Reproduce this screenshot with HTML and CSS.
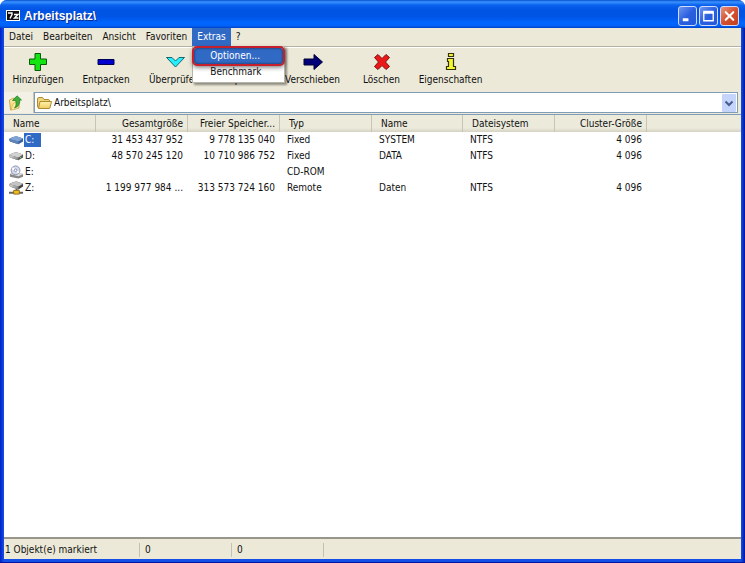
FILE: index.html
```html
<!DOCTYPE html>
<html lang="de">
<head>
<meta charset="utf-8">
<title>Arbeitsplatz\</title>
<link rel="stylesheet" href="styles.css">
</head>
<body>
<svg class="defs" aria-hidden="true">
  <defs>
    <linearGradient id="metal" x1="0" y1="0" x2="1" y2="1">
      <stop offset="0" stop-color="#e4e4e4"/><stop offset="1" stop-color="#777"/>
    </linearGradient>
    <linearGradient id="gold" x1="0" y1="0" x2="0" y2="1">
      <stop offset="0" stop-color="#fff3ae"/><stop offset="1" stop-color="#efcb62"/>
    </linearGradient>
  </defs>
</svg>
<div class="window">
  <header class="titlebar">
    <svg class="app-icon" viewBox="0 0 14 11">
      <rect width="14" height="11" fill="#fff"/><rect x="1" y="1" width="12" height="9" fill="#111"/>
      <path d="M2 3H6V4.500L4 8.500M8 4.500H12L8.500 8H12.500" fill="none" stroke="#fff" stroke-width="1.4"/>
    </svg>
    <h1>Arbeitsplatz\</h1>
    <div class="controls">
      <button class="control" aria-label="Minimieren"><svg viewBox="0 0 18 18"><path d="M4 13H10" stroke="#fff" stroke-width="3"/></svg></button>
      <button class="control" aria-label="Maximieren"><svg viewBox="0 0 18 18"><path d="M4 5H14V14H4Z" fill="none" stroke="#fff" stroke-width="1.4"/><path d="M3.500 5H14.500" stroke="#fff" stroke-width="3"/></svg></button>
      <button class="control close" aria-label="Schließen"><svg viewBox="0 0 18 18"><path d="M5 5L13 13M13 5L5 13" stroke="#fff" stroke-width="2.200" stroke-linecap="round"/></svg></button>
    </div>
  </header>

  <div class="client">
    <nav class="menubar">
      <button>Datei</button>
      <button>Bearbeiten</button>
      <button>Ansicht</button>
      <button>Favoriten</button>
      <div class="menu-open">
        <button class="active">Extras</button>
        <div class="dropdown">
          <button class="marked">Optionen...</button>
          <button>Benchmark</button>
        </div>
      </div>
      <button>?</button>
    </nav>

    <div class="toolbar">
      <button><svg viewBox="0 0 20 20"><path d="M7 1.500H12.500V7H18.500V12.500H12.500V18.500H7V12.500H1.500V7H7Z" fill="#12e512" stroke="#075d09"/></svg>Hinzufügen</button>
      <button><svg viewBox="0 0 20 20"><path d="M2 7.500H18V12.500H2Z" fill="#0000cf" stroke="#000050"/></svg>Entpacken</button>
      <button><svg viewBox="0 0 20 20"><path d="M1.500 5.500H7L10.500 9L14 5.500H19.500L10.500 15Z" fill="#25efff" stroke="#17666c"/></svg>Überprüfen</button>
      <button><svg viewBox="0 0 20 20"><path d="M1 7H11V3L19 10L11 17V13H1Z" fill="#0a8" stroke="#043"/></svg>Kopieren</button>
      <button><svg viewBox="0 0 20 20"><path d="M1 7H11V2.500L19.500 10L11 17.500V13H1Z" fill="#000078" stroke="#000034"/></svg>Verschieben</button>
      <button><svg viewBox="0 0 20 20"><path d="M6 2.500L10 6.500L14 2.500L17.500 5.500L13.500 10L17.500 14.500L14 17.500L10 13.500L6 17.500L2.500 14.500L6.500 10L2.500 5.500Z" fill="#ec1717" stroke="#781414"/></svg>Löschen</button>
      <button><svg viewBox="0 0 20 20"><path d="M7.500 1.500H12.500V4.500H7.500ZM6.500 6.500H12.500V14.500H14.500V17.500H5.500V14.500H7.500V9.500H6.500Z" fill="#f5f532" stroke="#32320a" stroke-width="1.200"/></svg>Eigenschaften</button>
    </div>

    <div class="addressbar">
      <button class="up" aria-label="Übergeordneter Ordner">
        <svg viewBox="0 0 16 16"><path d="M1.500 5L6 3L7 5L11 4V13L2.500 15Z" fill="url(#gold)" stroke="#c9a94c"/><path d="M3 15L5.500 8L12 6.500L10 13.500Z" fill="#ffeaa0" stroke="#d2b154" stroke-width=".6"/><path d="M4.500 5.500L9 .8L13.500 5L11.500 5.200C12 9 10 12 6.500 13C8.500 10.500 8.500 8 7.500 5.500Z" fill="#3fae38" stroke="#1d7a22" stroke-width=".7"/></svg>
      </button>
      <div class="combo">
        <svg class="folder" viewBox="0 0 16 16"><path d="M1.500 4Q1.500 2.500 3 2.500H6.500L8 4.500H12.500Q13.500 4.500 13.500 6V13H3Q1.500 13 1.500 11Z" fill="#f0d67a" stroke="#ab8b2c"/><path d="M2.500 13.500L4 6.500H15.500L14 12.500Q13.800 13.500 13 13.500Z" fill="url(#gold)" stroke="#ab8b2c"/></svg>
        <select aria-label="Adresse"><option>Arbeitsplatz\</option></select>
        <svg class="arrow" viewBox="0 0 14 18"><rect width="14" height="18" rx="1" fill="#c5d4fb"/><path d="M3.500 7.500L7 11L10.500 7.500" fill="none" stroke="#465d8d" stroke-width="2"/></svg>
      </div>
    </div>

    <main class="files">
      <table>
        <colgroup><col class="c-data"><col class="c-data"><col class="c-data"><col class="c-data"><col class="c-short"><col class="c-data"><col class="c-data"><col></colgroup>
        <thead><tr><th>Name</th><th class="num">Gesamtgröße</th><th class="num free">Freier Speicher...</th><th>Typ</th><th>Name</th><th>Dateisystem</th><th class="num">Cluster-Größe</th><th class="rest"></th></tr></thead>
        <tbody>
          <tr><td class="drive"><svg viewBox="0 0 16 14"><path d="M0 6Q5 3 8 3L15 5.500V8.500L10 11.500L1 8.500Z" fill="#3a62a0"/><path d="M0 6Q5 3 8 3L15 5.500L10 8.500Z" fill="#7fa3d3"/><path d="M0 6L10 8.500V11.500L1 8.500Z" fill="#5f83b8"/></svg><span class="selected">C:</span></td><td class="num">31 453 437 952</td><td class="num">9 778 135 040</td><td>Fixed</td><td>SYSTEM</td><td>NTFS</td><td class="num">4 096</td><td></td></tr>
          <tr><td class="drive"><svg viewBox="0 0 16 14"><path d="M0 6Q5 3 8 3L15 5.500V8.500L10 11.500L1 8.500Z" fill="#555"/><path d="M0 6Q5 3 8 3L15 5.500L10 8.500Z" fill="#d2d2d2"/><path d="M0 6L10 8.500V11.500L1 8.500Z" fill="url(#metal)"/><path d="M11.500 9L13 8" stroke="#7ddd68"/></svg><span>D:</span></td><td class="num">48 570 245 120</td><td class="num">10 710 986 752</td><td>Fixed</td><td>DATA</td><td>NTFS</td><td class="num">4 096</td><td></td></tr>
          <tr><td class="drive"><svg viewBox="0 0 16 14"><path d="M1 9L5 7L15 9V12L10 14L1 12Z" fill="#888"/><path d="M1 9L5 7L15 9L10 11.500Z" fill="#ddd"/><circle cx="7" cy="5.200" r="4.700" fill="#d5d9ee" stroke="#8c92ac"/><path d="M7 5.200L3.500 3M7 5.200L10.500 7.500" stroke="#fff" stroke-width="2"/><circle cx="7" cy="5.200" r="1.400" fill="#fff" stroke="#8187ad"/></svg><span>E:</span></td><td></td><td></td><td>CD-ROM</td><td></td><td></td><td></td><td></td></tr>
          <tr><td class="drive"><svg viewBox="0 0 16 14"><path d="M0 3Q5 0 8 0L15 2.500V5.500L10 8.500L1 5.500Z" fill="#454545"/><path d="M0 3Q5 0 8 0L15 2.500L10 5.500Z" fill="#c4c4c4"/><path d="M0 3L10 5.500V8.500L1 5.500Z" fill="url(#metal)"/><path d="M8 8V11M0 12H15" stroke="#666" stroke-width="2"/><path d="M5 9.500H11V13.500H5Z" fill="#f1bf22" stroke="#8a6b15"/></svg><span>Z:</span></td><td class="num">1 199 977 984 ...</td><td class="num">313 573 724 160</td><td>Remote</td><td>Daten</td><td>NTFS</td><td class="num">4 096</td><td></td></tr>
        </tbody>
      </table>
    </main>

    <footer class="statusbar"><span class="count">1 Objekt(e) markiert</span><span>0</span><span>0</span></footer>
  </div>
</div>
</body>
</html>
```
FILE: styles.css
```css
* { box-sizing: border-box; }

body {
  margin: 0;
  background: #fff;
  color: #111;
  font: 10px/14px "DejaVu Sans Condensed", "DejaVu Sans", sans-serif;
}

button, select {
  margin: 0;
  padding: 0;
  border: 0;
  background: none;
  color: inherit;
  font: inherit;
}

.defs { position: absolute; width: 0; height: 0; }

.window {
  display: flex;
  flex-direction: column;
  height: 100vh;
  padding: 0 4px 3px;
  background: linear-gradient(90deg, #0020c8, #1450e8 4px, #1450e8 calc(100% - 4px), #0014a0);
  border-bottom: 1px solid #0014a0;
  border-radius: 7px 7px 0 0;
  overflow: hidden;
}

.titlebar {
  display: flex;
  align-items: center;
  flex: none;
  height: 28px;
  margin: 0 -4px;
  padding: 3px 6px 0;
  background: linear-gradient(#0850d0, #3a93ff 2px, #0a62ee 5px, #0054e3 10px, #0055e6 17px, #0066ff 23px, #0060f8 26px, #0041c2);
}

.app-icon { width: 14px; height: 11px; }

h1 {
  flex: 1;
  margin: 0 0 0 4px;
  color: #fff;
  font: bold 12px/16px "Liberation Sans", sans-serif;
  text-shadow: 1px 1px #0a2a8c;
}

.controls { display: flex; gap: 2px; }

.control {
  width: 19px;
  height: 20px;
  border: 1px solid #cfdcfb;
  border-radius: 3px;
  background: linear-gradient(135deg, #6d95f0, #2a5fe0 50%, #2358d8);
}

.control svg { display: block; width: 17px; height: 18px; }
.close { background: linear-gradient(135deg, #e8947c, #d4502f 50%, #c3401f); }

.client {
  display: flex;
  flex: 1;
  flex-direction: column;
  min-height: 0;
  background: #ece9d8;
}

.menubar {
  display: flex;
  flex: none;
  height: 19px;
  border-bottom: 1px solid #b5b2a2;
}

.menubar button { height: 18px; padding: 0 5px; }
.menu-open { position: relative; }
.menubar .active { background: #316ac5; color: #fff; }

.dropdown {
  position: absolute;
  z-index: 1;
  top: 18px;
  left: 0;
  width: 93px;
  padding: 1px 1px 2px;
  background: #fff;
  border: 1px solid #b7b5a9;
  box-shadow: 2px 2px 2px #0006;
}

.menubar .dropdown button {
  display: block;
  width: 100%;
  height: 16px;
  padding: 0 16px;
  text-align: left;
}

.dropdown .marked {
  border-radius: 3px;
  outline: 2px solid #c5202c;
  background: #316ac5;
  box-shadow: inset 0 0 3px #0009, 0 2px 5px 1px #0009;
  color: #fff;
}

.toolbar {
  display: grid;
  flex: none;
  grid-template-columns: 68px 68px repeat(5, 69px);
  height: 45px;
  border-top: 1px solid #fff;
}

.toolbar button {
  display: flex;
  flex-direction: column;
  align-items: center;
  padding-top: 4px;
}

.toolbar svg { width: 20px; height: 20px; margin-bottom: 1px; }

.addressbar { display: flex; flex: none; height: 21px; padding-right: 3px; }
.up { width: 30px; padding-left: 4px; border-right: 1px solid #c6c3b4; background: #f3f1e6; }
.up svg { display: block; width: 16px; height: 16px; }

.combo {
  display: flex;
  flex: 1;
  align-items: center;
  padding: 0 1px;
  border: 1px solid #7f9db9;
  background: #fff;
}

.folder { width: 16px; height: 16px; }
.combo select { flex: 1; height: 17px; margin-left: 2px; appearance: none; }
.arrow { width: 14px; height: 18px; }

.files {
  flex: 1;
  min-height: 0;
  margin-top: 1px;
  border-top: 1px solid #7f9db9;
  background: #fff;
  overflow: hidden;
}

table { width: 100%; border-collapse: separate; border-spacing: 0; table-layout: fixed; }
.c-short { width: 91px; }
.c-data { width: 92px; }

th, td {
  height: 16px;
  padding: 0 5px 0 7px;
  font-weight: normal;
  line-height: 14px;
  text-align: left;
  white-space: nowrap;
}

th {
  height: 17px;
  padding: 0 4px 0 9px;
  border-right: 1px solid #c7c5b2;
  background: linear-gradient(#ebeadb 13px, #d6d2c2);
}

.num { text-align: right; }
.free { padding-left: 0; }
.rest { border-right: 0; }
.drive { display: flex; align-items: center; padding: 0 0 0 5px; }
.drive svg { width: 15px; height: 14px; }
.drive span { padding: 0 1px; }
.drive .selected { width: 17px; background: #316ac5; color: #fff; }

.statusbar {
  display: flex;
  flex: none;
  height: 22px;
  padding: 4px 0 2px;
  border-top: 2px solid #98968b;
}

.statusbar span {
  width: 92px;
  padding-left: 5px;
  border-right: 1px solid #c5c2b3;
}

.statusbar .count { width: 136px; padding-left: 1px; }
```
